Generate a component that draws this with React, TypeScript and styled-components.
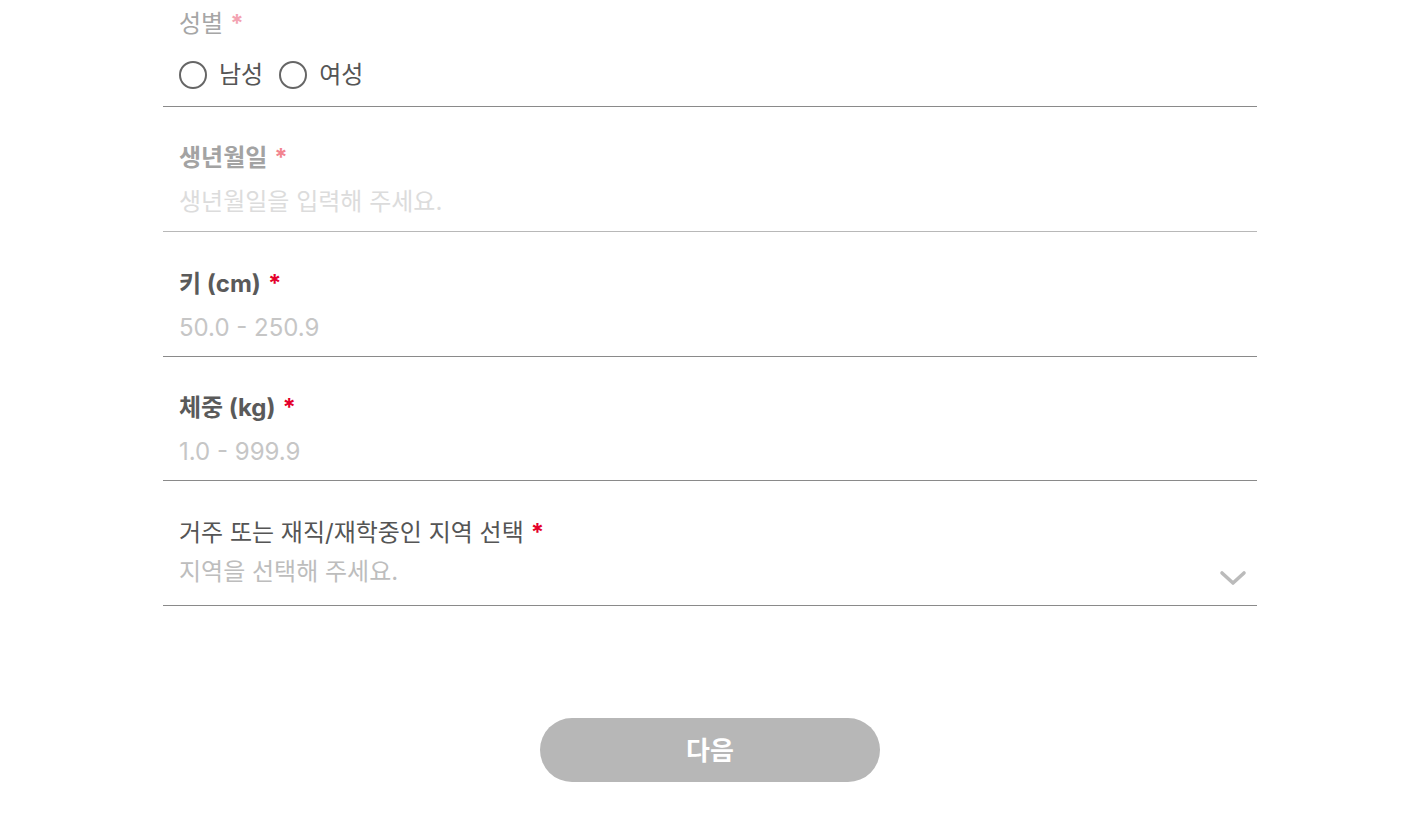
import React from "react";
import styled, { createGlobalStyle } from "styled-components";

const GlobalStyle = createGlobalStyle`
  html, body {
    margin: 0;
    padding: 0;
    background: #fff;
  }
  body {
    font-family: Inter, "Noto Sans CJK KR", "Noto Sans", sans-serif;
  }
`;

const Page = styled.div`
  width: 1094px;
  margin-left: 163px;
  display: flex;
  flex-direction: column;
`;

const Field = styled.div<{ $line: string; $top: number; $gap: number; $bottom: number }>`
  display: flex;
  flex-direction: column;
  gap: ${(p) => p.$gap}px;
  padding: ${(p) => p.$top}px 16px ${(p) => p.$bottom}px;
  border-bottom: 1px solid ${(p) => p.$line};
`;

const Label = styled.div<{ $color: string; $bold?: boolean }>`
  font-size: 24px;
  line-height: 28px;
  height: 28px;
  color: ${(p) => p.$color};
  font-weight: ${(p) => (p.$bold ? 700 : 400)};
`;

const Star = styled.span<{ $color: string }>`
  color: ${(p) => p.$color};
  margin-left: 7px;
  font-weight: 700;
`;

const InputRow = styled.div`
  display: flex;
  align-items: center;
  justify-content: space-between;
  height: 30px;
`;

const Placeholder = styled.span<{ $color: string }>`
  font-size: 24px;
  line-height: 30px;
  color: ${(p) => p.$color};
`;

const Radios = styled.div`
  display: flex;
  align-items: center;
  gap: 16px;
  height: 30px;
`;

const RadioOption = styled.label`
  display: flex;
  align-items: center;
  gap: 12px;
  font-size: 24px;
  line-height: 30px;
  color: #555;
`;

const Circle = styled.span`
  width: 24px;
  height: 24px;
  border: 2px solid #666;
  border-radius: 50%;
  box-sizing: content-box;
`;

const Chevron = styled.svg`
  width: 28px;
  height: 28px;
  margin-right: -6px;
  margin-top: 12px;
`;

const Footer = styled.div`
  display: flex;
  justify-content: center;
  padding-top: 112px;
`;

const NextButton = styled.button`
  width: 340px;
  height: 64px;
  padding: 0 0 4px;
  border: none;
  border-radius: 32px;
  background: #b7b7b7;
  color: #fff;
  font-family: inherit;
  font-size: 26px;
  font-weight: 700;
  cursor: default;
`;

export default function App() {
  return (
    <>
      <GlobalStyle />
      <Page>
        <Field $line="#8a8a8a" $top={10} $gap={22} $bottom={16}>
          <Label $color="#a6a6a6">
            성별<Star $color="#f3a3b2">*</Star>
          </Label>
          <Radios>
            <RadioOption>
              <Circle />
              남성
            </RadioOption>
            <RadioOption>
              <Circle />
              여성
            </RadioOption>
          </Radios>
        </Field>

        <Field $line="#b8b8b8" $top={37} $gap={15} $bottom={14}>
          <Label $color="#a3a3a3" $bold>
            생년월일<Star $color="#f2848f">*</Star>
          </Label>
          <InputRow>
            <Placeholder $color="#dcdcdc">생년월일을 입력해 주세요.</Placeholder>
          </InputRow>
        </Field>

        <Field $line="#8a8a8a" $top={38} $gap={15} $bottom={13}>
          <Label $color="#5a5a5a" $bold>
            키 (cm)<Star $color="#e4002b">*</Star>
          </Label>
          <InputRow>
            <Placeholder $color="#c6c6c6">50.0 - 250.9</Placeholder>
          </InputRow>
        </Field>

        <Field $line="#8a8a8a" $top={37} $gap={15} $bottom={13}>
          <Label $color="#5a5a5a" $bold>
            체중 (kg)<Star $color="#e4002b">*</Star>
          </Label>
          <InputRow>
            <Placeholder $color="#c6c6c6">1.0 - 999.9</Placeholder>
          </InputRow>
        </Field>

        <Field $line="#8a8a8a" $top={38} $gap={10} $bottom={18}>
          <Label $color="#555">
            거주 또는 재직/재학중인 지역 선택<Star $color="#e4002b">*</Star>
          </Label>
          <InputRow>
            <Placeholder $color="#bdbdbd">지역을 선택해 주세요.</Placeholder>
            <Chevron viewBox="0 0 28 28">
              <path
                d="M3 9 L14 19 L25 9"
                fill="none"
                stroke="#bbb"
                strokeWidth="3.6"
                strokeLinecap="round"
                strokeLinejoin="round"
              />
            </Chevron>
          </InputRow>
        </Field>

        <Footer>
          <NextButton>다음</NextButton>
        </Footer>
      </Page>
    </>
  );
}
